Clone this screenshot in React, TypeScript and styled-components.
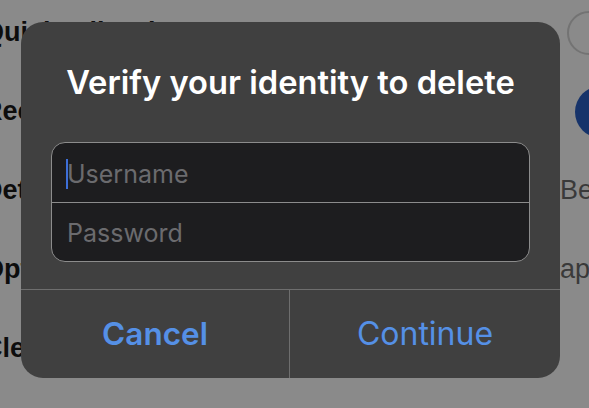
import {FC} from 'react';
import styled, {createGlobalStyle} from 'styled-components';

const GlobalStyle = createGlobalStyle`
  html, body {
    margin: 0;
    padding: 0;
    background: #8a8a8a;
    overflow: hidden;
  }
  body {
    font-family: "Liberation Sans", Arial, sans-serif;
  }
`;

type Row = {
    label: string
    control: 'radio' | 'filled' | 'text' | 'none'
    value?: string
}

const rows: Row[] = [
    {label: 'Quick tall swipe', control: 'radio'},
    {label: 'Recent', control: 'filled'},
    {label: 'Details', control: 'text', value: 'Beta'},
    {label: 'Options', control: 'text', value: 'app'},
    {label: 'Clear', control: 'none'},
];

const App: FC = () => {
    return (
        <Page>
            <GlobalStyle/>
            <SettingsList>
                {rows.map(row => (
                    <SettingsRow key={row.label}>
                        <Label>{row.label}</Label>
                        {row.control === 'radio' && <Radio/>}
                        {row.control === 'filled' && <Filled/>}
                        {row.control === 'text' && <Value>{row.value}</Value>}
                    </SettingsRow>
                ))}
            </SettingsList>

            <Dialog>
                <Title>Verify your identity to delete</Title>
                <FieldGroup>
                    <Field>
                        <Caret/>
                        <Placeholder>Username</Placeholder>
                    </Field>
                    <Field $last>
                        <Placeholder>Password</Placeholder>
                    </Field>
                </FieldGroup>
                <Actions>
                    <ActionButton $bold>Cancel</ActionButton>
                    <ActionButton>Continue</ActionButton>
                </Actions>
            </Dialog>
        </Page>
    )
};

export default App;

const Page = styled.div`
  position: relative;
  width: 589px;
  height: 408px;
  overflow: hidden;
  background: #8a8a8a;
`;

const SettingsList = styled.div`
  display: flex;
  flex-direction: column;
  margin-left: -17px;
  width: 628px;
`;

const SettingsRow = styled.div`
  display: flex;
  justify-content: space-between;
  align-items: center;
  height: 79px;

  &:first-child {
    margin-top: -7px;
  }
`;

const Label = styled.span`
  font-size: 27px;
  font-weight: 700;
  color: #0d0d0d;
`;

const Radio = styled.div`
  width: 44px;
  height: 44px;
  border: 2px solid #737373;
  border-radius: 50%;
  box-sizing: border-box;
`;

const Filled = styled.div`
  width: 52px;
  height: 52px;
  border-radius: 50%;
  background: #16336a;
  margin-right: -16px;
`;

const Value = styled.span`
  font-size: 27px;
  color: #3a3a3a;
  width: 51px;
`;

const Dialog = styled.div`
  position: absolute;
  left: 21px;
  top: 22px;
  width: 539px;
  height: 356px;
  background: #404040;
  border-radius: 22px;
  display: flex;
  flex-direction: column;
  align-items: center;
  overflow: hidden;
  font-family: Inter, "Liberation Sans", sans-serif;
`;

const Title = styled.div`
  margin-top: 41px;
  font-size: 32.7px;
  line-height: 38px;
  font-weight: 600;
  color: #ffffff;
`;

const FieldGroup = styled.div`
  margin-top: 41px;
  width: 479px;
  height: 120px;
  box-sizing: border-box;
  border: 1.5px solid #8c8c8c;
  border-radius: 14px;
  background: #1d1d1f;
  display: flex;
  flex-direction: column;
  overflow: hidden;
`;

const Field = styled.div<{ $last?: boolean }>`
  position: relative;
  flex: 1;
  display: flex;
  align-items: center;
  padding-left: 15px;
  padding-top: 3px;
  border-bottom: ${props => props.$last ? 'none' : '1.5px solid #8c8c8c'};
`;

const Placeholder = styled.span`
  font-size: 25px;
  color: #6b6b6e;
`;

const Caret = styled.span`
  position: absolute;
  left: 14px;
  top: 16px;
  width: 2px;
  height: 30px;
  background: #3d6fd8;
`;

const Actions = styled.div`
  margin-top: auto;
  width: 100%;
  height: 88px;
  display: grid;
  grid-template-columns: 269px 1fr;
  border-top: 1px solid #6e6e6e;
`;

const ActionButton = styled.div<{ $bold?: boolean }>`
  display: flex;
  align-items: center;
  justify-content: center;
  font-size: ${props => props.$bold ? 31.5 : 32}px;
  font-weight: ${props => props.$bold ? 600 : 400};
  color: #5590e6;
  padding-bottom: 2px;

  &:first-child {
    border-right: 1px solid #6e6e6e;
  }
`;
